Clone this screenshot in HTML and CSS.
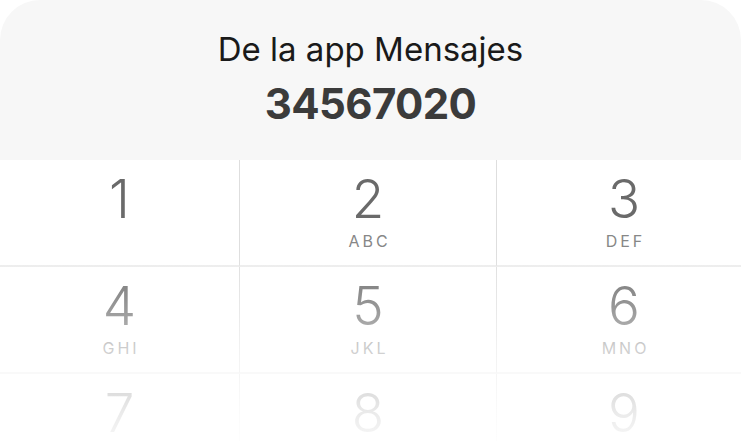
FILE: index.html
```html
<!DOCTYPE html>
<html lang="es">
<head>
<meta charset="utf-8">
<title>Código de verificación</title>
<link rel="stylesheet" href="styles.css">
</head>
<body>
<div class="sheet">
  <header class="header">
    <div class="title">De la app Mensajes</div>
    <div class="code">34567020</div>
  </header>
  <div class="pad-wrap">
    <div class="keypad">
      <div class="key"><span class="digit">1</span><span class="letters"></span></div>
      <div class="key"><span class="digit">2</span><span class="letters">ABC</span></div>
      <div class="key last"><span class="digit">3</span><span class="letters">DEF</span></div>
      <div class="key"><span class="digit">4</span><span class="letters">GHI</span></div>
      <div class="key"><span class="digit">5</span><span class="letters">JKL</span></div>
      <div class="key last"><span class="digit">6</span><span class="letters">MNO</span></div>
      <div class="key"><span class="digit">7</span></div>
      <div class="key"><span class="digit">8</span></div>
      <div class="key last"><span class="digit">9</span></div>
    </div>
    <div class="fade"></div>
  </div>
</div>
</body>
</html>
```

FILE: styles.css
```css
html, body {
  margin: 0;
  padding: 0;
  background: #ffffff;
}

body {
  width: 741px;
  height: 441px;
  overflow: hidden;
  font-family: "Inter", "Liberation Sans", sans-serif;
}

.sheet {
  display: flex;
  flex-direction: column;
  width: 741px;
}

.header {
  height: 160px;
  box-sizing: border-box;
  padding-top: 33px;
  background: #f7f7f7;
  border-radius: 40px 40px 0 0;
  display: flex;
  flex-direction: column;
  align-items: center;
}

.title {
  font-size: 33px;
  line-height: 1;
  font-weight: 400;
  color: #1a1a1a;
}

.code {
  margin-top: 17px;
  font-size: 42px;
  line-height: 1;
  font-weight: 700;
  color: #3b3b3b;
  letter-spacing: -0.6px;
}

.pad-wrap {
  position: relative;
  height: 281px;
  overflow: hidden;
}

.keypad {
  display: grid;
  grid-template-columns: 240px 257px 1fr;
  grid-auto-rows: 107px;
}

.key {
  box-sizing: border-box;
  display: flex;
  flex-direction: column;
  align-items: center;
  padding-top: 16px;
  border-right: 1px solid #dedede;
  border-bottom: 2px solid #ececec;
}

.key.last {
  border-right: none;
  padding-left: 10px;
}

.digit {
  font-size: 53px;
  line-height: 0.9;
  font-weight: 300;
  color: #6a6a6a;
}

.letters {
  margin-top: 9px;
  font-size: 16px;
  line-height: 1;
  height: 16px;
  letter-spacing: 3px;
  padding-left: 3px;
  color: #878787;
}

.fade {
  position: absolute;
  inset: 0;
  background: linear-gradient(to bottom,
    rgba(255, 255, 255, 0) 0px,
    rgba(255, 255, 255, 0) 90px,
    rgba(255, 255, 255, 0.32) 150px,
    rgba(255, 255, 255, 0.6) 190px,
    rgba(255, 255, 255, 0.87) 255px,
    rgba(255, 255, 255, 0.95) 281px);
  pointer-events: none;
}
```
